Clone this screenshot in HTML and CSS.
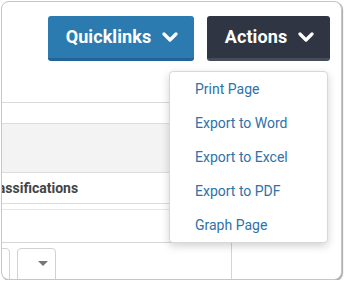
FILE: index.html
```html
<!DOCTYPE html>
<html>
<head>
<meta charset="utf-8">
<link rel="stylesheet" href="styles.css">
</head>
<body>
<div class="frame">
  <div class="header">
    <button class="btn btn-blue">Quicklinks
      <svg class="chev" width="16" height="10" viewBox="0 0 16 10"><polyline points="2,2 8,8 14,2" fill="none" stroke="#fff" stroke-width="3.2" stroke-linecap="round" stroke-linejoin="round"/></svg>
    </button>
    <button class="btn btn-dark">Actions
      <svg class="chev" width="16" height="10" viewBox="0 0 16 10"><polyline points="2,2 8,8 14,2" fill="none" stroke="#fff" stroke-width="3.2" stroke-linecap="round" stroke-linejoin="round"/></svg>
    </button>
  </div>
  <div class="main">
    <div class="col">
      <div class="gap20"></div>
      <div class="band"></div>
      <div class="thead"><span class="th">Classifications</span></div>
      <div class="line2"></div>
      <div class="blank"></div>
      <div class="inputs">
        <div class="inp inp-a"></div>
        <div class="inp inp-b"><span class="caret"></span></div>
      </div>
    </div>
  </div>
  <ul class="menu">
    <li>Print Page</li>
    <li>Export to Word</li>
    <li>Export to Excel</li>
    <li>Export to PDF</li>
    <li>Graph Page</li>
  </ul>
</div>
</body>
</html>
```
FILE: styles.css
```css
html, body { margin: 0; padding: 0; background: #fff; }
body { font-family: Roboto, "Liberation Sans", Arial, sans-serif; }
.frame {
  position: relative;
  box-sizing: border-box;
  margin: 1px 0 0 1px;
  width: 341px;
  height: 279px;
  border: 1px solid #c6c6c6;
  border-radius: 8px;
  box-shadow: 1px 1px 1px rgba(0,0,0,0.35);
  overflow: hidden;
  background: #fff;
}
.header {
  display: flex;
  justify-content: flex-end;
  gap: 13px;
  padding: 14px 11px 0 0;
  height: 45px;
}
.btn {
  box-sizing: border-box;
  height: 45px;
  border: 0;
  border-radius: 3px;
  color: #fff;
  font-family: Roboto, "Liberation Sans", Arial, sans-serif;
  font-weight: 700;
  font-size: 18px;
  letter-spacing: 0.1px;
  display: flex;
  align-items: center;
  justify-content: center;
  gap: 11px;
  padding: 0 0 1px 2px;
  cursor: pointer;
}
.btn-blue { width: 146px; background: #2b7bb1; border-bottom: 3px solid #22649a; }
.btn-dark { width: 123px; background: #2f3542; border-bottom: 3px solid #464d5a; }
.chev { display: block; margin-top: 1px; }
.main { margin-top: 41px; display: flex; }
.col {
  box-sizing: border-box;
  width: 230px;
  height: 200px;
  border-top: 1px solid #dadada;
  border-right: 1px solid #d4d4d4;
  display: flex;
  flex-direction: column;
}
.gap20 { height: 20px; }
.band { height: 48px; background: #f3f3f3; border-top: 1px solid #dcdcdc; border-bottom: 1px solid #dcdcdc; }
.thead {
  height: 30px;
  border-bottom: 1px solid #dcdcdc;
  display: flex;
  align-items: center;
  overflow: hidden;
}
.th {
  margin-left: -17px;
  font-size: 14px;
  font-weight: 700;
  color: #444;
  white-space: nowrap;
}
.line2 { height: 5px; border-bottom: 1px solid #e6e6e6; }
.blank { height: 32px; border-bottom: 1px solid #d6d6d6; }
.inputs { display: flex; gap: 7px; margin-top: 5px; margin-left: -10px; }
.inp {
  box-sizing: border-box;
  height: 40px;
  border: 1px solid #d2d2d2;
  border-radius: 4px;
  position: relative;
}
.inp-a { width: 18px; }
.inp-b { width: 39px; }
.caret {
  position: absolute;
  left: 20px;
  top: 12px;
  width: 0; height: 0;
  border-left: 5px solid transparent;
  border-right: 5px solid transparent;
  border-top: 5px solid #777;
}
.menu {
  position: absolute;
  left: 167px;
  top: 69px;
  width: 159px;
  box-sizing: border-box;
  margin: 0;
  padding: 0;
  list-style: none;
  background: #fff;
  border: 1px solid #d8d8d8;
  border-radius: 4px;
  box-shadow: 0 3px 8px rgba(0,0,0,0.18);
}
.menu li {
  height: 34px;
  line-height: 34px;
  padding-left: 25px;
  font-size: 14px;
  color: #2d72a8;
}
```
